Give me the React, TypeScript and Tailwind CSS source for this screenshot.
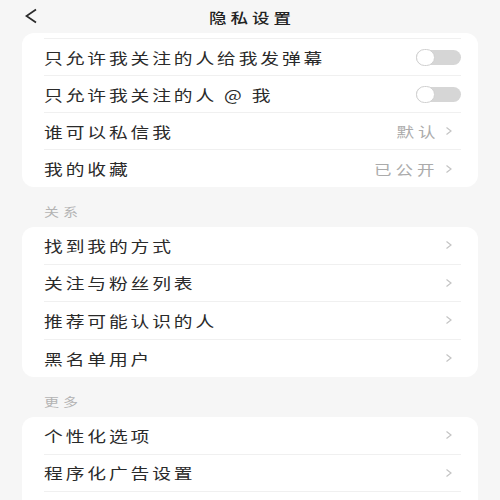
import React from "react";

const font = { fontFamily: '"Noto Sans CJK SC", "Noto Sans", sans-serif' };

function Toggle() {
  return (
    <div className="relative w-[45px] h-[15px] rounded-full bg-[#d6d6d6]">
      <div className="absolute left-0 top-[-1px] w-[19px] h-[17px] rounded-full bg-white border border-[#d0d0d0]" />
    </div>
  );
}

function Chevron() {
  return (
    <svg width="8" height="12" viewBox="0 0 8 12" className="ml-[6px]">
      <path d="M1.5 2.5 L6 6 L1.5 9.5" fill="none" stroke="#c4c4c4" strokeWidth="1.2" />
    </svg>
  );
}

type Row = { label?: string; right?: "toggle" | "chevron"; value?: string };

function Card({ rows, topCut, tall }: { rows: Row[]; topCut?: boolean; tall?: boolean }) {
  return (
    <div className="mx-[22px] bg-white rounded-[12px] pl-[22px] pr-[17px]">
      {topCut && <div className="h-[6px] border-b border-[#f0f0f0]" />}
      {rows.map((r, i) => (
        <div
          key={i}
          className={`${tall ? "h-[37.5px]" : "h-[37px]"} flex items-center justify-between ${
            i < rows.length - 1 ? "border-b border-[#f0f0f0]" : ""
          }`}
        >
          <span className="inline-block origin-left scale-x-[1.25] text-[15px] tracking-[2.3px] text-[#2a2a2a] leading-none">
            {r.label}
          </span>
          {r.right === "toggle" ? (
            <Toggle />
          ) : r.right === "chevron" ? (
            <div className="flex items-center pr-[8px]">
              {r.value && (
                <span className="inline-block origin-right scale-x-[1.25] text-[14px] tracking-[3.2px] text-[#ababab] leading-none">
                  {r.value}
                </span>
              )}
              <Chevron />
            </div>
          ) : null}
        </div>
      ))}
    </div>
  );
}

function SectionLabel({ text }: { text: string }) {
  return (
    <div className="h-[40px] pt-[10px] pl-[44px] flex items-center">
      <span className="inline-block origin-left scale-x-[1.25] text-[12px] tracking-[3.2px] text-[#b3b3b3] leading-none">
        {text}
      </span>
    </div>
  );
}

export default function App() {
  return (
    <div className="w-[500px] h-[500px] overflow-hidden bg-[#f6f6f6]" style={font}>
      <div className="h-[33px] relative flex items-center justify-center">
        <svg width="14" height="16" viewBox="0 0 14 16" className="absolute left-[24px] top-[8px]">
          <path d="M12 1.5 L2.5 8 L12 14.5" fill="none" stroke="#2a2a2a" strokeWidth="1.7" />
        </svg>
        <span className="inline-block scale-x-[1.25] text-[14px] font-medium tracking-[3.2px] pl-[3.2px] text-[#222] leading-none">
          隐私设置
        </span>
      </div>
      <Card
        topCut
        rows={[
          { label: "只允许我关注的人给我发弹幕", right: "toggle" },
          { label: "只允许我关注的人 @ 我", right: "toggle" },
          { label: "谁可以私信我", right: "chevron", value: "默认" },
          { label: "我的收藏", right: "chevron", value: "已公开" },
        ]}
      />
      <SectionLabel text="关系" />
      <Card
        tall
        rows={[
          { label: "找到我的方式", right: "chevron" },
          { label: "关注与粉丝列表", right: "chevron" },
          { label: "推荐可能认识的人", right: "chevron" },
          { label: "黑名单用户", right: "chevron" },
        ]}
      />
      <SectionLabel text="更多" />
      <Card
        tall
        rows={[
          { label: "个性化选项", right: "chevron" },
          { label: "程序化广告设置", right: "chevron" },
          {},
        ]}
      />
    </div>
  );
}
